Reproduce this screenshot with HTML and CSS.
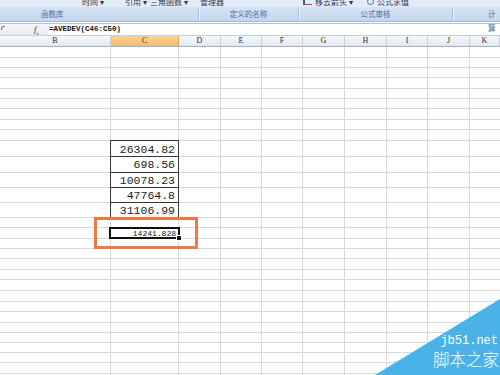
FILE: index.html
```html
<!DOCTYPE html>
<html lang="zh-CN">
<head>
    <meta charset="UTF-8">
    <title>AVEDEV</title>
    <link rel="stylesheet" href="styles.css">
</head>
<body>
    <div class="ribbon">
        <div class="ribbon-top">
            <span></span>
            <span class="cmd">时间 ▾</span>
            <span class="cmd">引用 ▾</span>
            <span class="cmd">三角函数 ▾</span>
            <span class="cmd">管理器</span>
            <span class="cmd"><i class="ico arrows"></i>移去箭头 ▾</span>
            <span class="cmd"><i class="ico lens"></i>公式求值</span>
        </div>
        <div class="groups">
            <div class="group g-lib">函数库</div>
            <div class="group g-name">定义的名称</div>
            <div class="group g-audit">公式审核</div>
            <div class="group g-calc">计算</div>
        </div>
    </div>

    <div class="formula-bar">
        <div class="name-box"><span class="corner"></span></div>
        <div class="fx"><i>f</i><sub>x</sub></div>
        <div class="formula">=AVEDEV(C46:C50)</div>
    </div>

    <div class="col-heads">
        <div class="head w-b">B</div>
        <div class="head w-c active">C</div>
        <div class="head w-d">D</div>
        <div class="head w-e">E</div>
        <div class="head w-f">F</div>
        <div class="head w-g">G</div>
        <div class="head w-h">H</div>
        <div class="head w-i">I</div>
        <div class="head w-j">J</div>
        <div class="head w-k">K</div>
    </div>

    <div class="sheet">
        <div class="row t"></div>
        <div class="row"></div>
        <div class="row"></div>
        <div class="row t"></div>
        <div class="row"></div>
        <div class="row"></div>
        <div class="row t"></div>
        <div class="row"></div>
        <div class="row t"></div>

        <div class="row data tall"><div class="cell first">26304.82</div></div>
        <div class="row data tall"><div class="cell">698.56</div></div>
        <div class="row data"><div class="cell">10078.23</div></div>
        <div class="row data"><div class="cell">47764.8</div></div>
        <div class="row data"><div class="cell">31106.99</div></div>

        <div class="row"></div>
        <div class="row t"><div class="result">14241.828<span class="handle"></span></div></div>
        <div class="row"></div>
        <div class="row"></div>
        <div class="row t"></div>
        <div class="row"></div>
        <div class="row t"></div>
        <div class="row t"></div>
        <div class="row"></div>
        <div class="row t"></div>
        <div class="row"></div>
        <div class="row"></div>
        <div class="row"></div>
        <div class="row"></div>
        <div class="row t"></div>
        <div class="row"></div>

        <div class="mark"></div>
    </div>

    <div class="watermark">
        <div class="wm-site">jb51.net</div>
        <div class="wm-name">脚本之家</div>
    </div>
</body>
</html>
```

FILE: styles.css
```css
body {
    margin: 0;
    width: 500px;
    height: 375px;
    overflow: hidden;
    position: relative;
    background: #ffffff;
    font-family: "Liberation Sans", "Noto Sans CJK SC", sans-serif;
}

/* ribbon */
.ribbon {
    height: 21px;
    border-bottom: 1px solid #a3bad8;
    background: #dde7f5;
}
.ribbon-top {
    height: 7px;
    overflow: hidden;
    display: grid;
    grid-template-columns: 82px 43px 25px 50px 103px 64px 1fr;
    background: #e4ecf8;
}
.cmd {
    font-family: "Noto Sans CJK SC", sans-serif;
    font-size: 8px;
    line-height: 9px;
    margin-top: -5px;
    color: #2a3550;
    white-space: nowrap;
    display: flex;
    align-items: center;
    overflow: hidden;
}
.ico {
    display: inline-block;
    flex: none;
    width: 7px;
    height: 6px;
    margin-right: 3px;
}
.arrows {
    border-left: 2px solid #3a5e98;
    border-bottom: 1px solid #c04040;
}
.lens {
    border: 1px solid #4d6b9a;
    border-radius: 50%;
    width: 5px;
    height: 5px;
}
.groups {
    display: flex;
    height: 14px;
    background: linear-gradient(#d6e3f3, #c4d6ee);
}
.group {
    flex: none;
    box-sizing: border-box;
    text-align: center;
    font-family: "Noto Sans CJK SC", sans-serif;
    font-size: 7.5px;
    line-height: 14px;
    color: #4d6d9c;
    border-right: 1px solid #a9bedb;
    box-shadow: 1px 0 0 #eef4fb;
}
.g-lib { width: 199px; text-align: left; padding-left: 41px; }
.g-name { width: 100px; }
.g-audit { width: 154px; }
.g-calc { flex: 1; text-align: left; padding-left: 35px; border-right: none; box-shadow: none; }

/* formula bar */
.formula-bar {
    display: flex;
    height: 11px;
    margin-top: 1px;
    border-top: 1px solid #b4c4d8;
    background: #ffffff;
}
.name-box {
    width: 30px;
    background: linear-gradient(#f4f6f9, #e8ecf2);
    position: relative;
}
.corner {
    position: absolute;
    left: 1px;
    top: 2px;
    width: 3px;
    height: 3px;
    border-top: 1px solid #777;
    border-left: 1px solid #777;
    border-top-left-radius: 3px;
}
.fx {
    width: 18px;
    font-family: "Liberation Serif", serif;
    font-size: 9px;
    line-height: 10px;
    color: #333;
    padding-left: 4px;
    box-sizing: border-box;
    background: linear-gradient(#f4f6f9, #e8ecf2);
}
.fx sub {
    font-size: 5px;
    font-style: italic;
}
.formula {
    flex: 1;
    padding-left: 1px;
    font-family: "Liberation Mono", monospace;
    font-size: 7.5px;
    font-weight: bold;
    line-height: 11px;
    color: #111;
}

/* column headings */
.col-heads {
    display: flex;
    height: 12px;
    box-sizing: border-box;
    border-top: 1px solid #c4cfdc;
    border-bottom: 1px solid #9fb2c7;
    background: linear-gradient(#f6f8fb, #e3e8ef);
}
.head {
    flex: none;
    box-sizing: border-box;
    border-right: 1px solid #c6d0dc;
    text-align: center;
    font-family: "Liberation Serif", serif;
    font-size: 8px;
    line-height: 10px;
    color: #2e2e2e;
}
.head.active {
    background: linear-gradient(#fad59a, #f4bc6c);
    border-right-color: #e3a955;
}
.w-b { width: 111px; }
.w-c { width: 68px; }
.w-d { width: 42px; }
.w-e { width: 41px; }
.w-f { width: 41px; }
.w-g { width: 42px; }
.w-h { width: 42px; }
.w-i { width: 41px; }
.w-j { width: 42px; }
.w-k { width: 30px; }

/* cells */
.sheet {
    position: relative;
    height: 329px;
    overflow: hidden;
    background:
        linear-gradient(#d6dae0, #d6dae0) 110px 0 / 1px 100% no-repeat,
        linear-gradient(#d6dae0, #d6dae0) 178px 0 / 1px 100% no-repeat,
        linear-gradient(#d6dae0, #d6dae0) 220px 0 / 1px 100% no-repeat,
        linear-gradient(#d6dae0, #d6dae0) 261px 0 / 1px 100% no-repeat,
        linear-gradient(#d6dae0, #d6dae0) 302px 0 / 1px 100% no-repeat,
        linear-gradient(#d6dae0, #d6dae0) 344px 0 / 1px 100% no-repeat,
        linear-gradient(#d6dae0, #d6dae0) 386px 0 / 1px 100% no-repeat,
        linear-gradient(#d6dae0, #d6dae0) 427px 0 / 1px 100% no-repeat,
        linear-gradient(#d6dae0, #d6dae0) 469px 0 / 1px 100% no-repeat,
        #ffffff;
}
.row {
    display: flex;
    height: 10px;
    box-sizing: border-box;
    border-bottom: 1px solid #d6dae0;
}
.row.t { height: 11px; }
.row.data { height: 15px; }
.row.data.tall { height: 16px; }
.cell {
    margin-left: 110px;
    width: 69px;
    height: calc(100% + 1px);
    box-sizing: border-box;
    border: 1px solid #3a3a3a;
    border-top: none;
    background: #ffffff;
    text-align: right;
    padding-right: 3px;
    font-family: "Liberation Mono", monospace;
    font-size: 11.5px;
    line-height: 15px;
    color: #1c1c1c;
}
.cell.first {
    margin-top: -1px;
    height: calc(100% + 2px);
    border-top: 1px solid #3a3a3a;
    line-height: 17px;
}
.result {
    position: relative;
    margin-left: 109px;
    margin-top: -1px;
    width: 71px;
    height: calc(100% + 2px);
    box-sizing: border-box;
    border: 2px solid #111;
    background: #ffffff;
    text-align: right;
    padding-right: 2px;
    font-family: "Liberation Mono", monospace;
    font-size: 8px;
    line-height: 9px;
    color: #111;
}
.handle {
    position: absolute;
    right: -4px;
    bottom: -4px;
    width: 4px;
    height: 4px;
    background: #111;
    border: 1px solid #fff;
}
.mark {
    position: absolute;
    left: 94px;
    top: 170px;
    width: 104px;
    height: 32px;
    box-sizing: border-box;
    border: 3px solid #ef7944;
}

/* watermark */
.watermark {
    position: absolute;
    right: 0;
    bottom: 0;
    width: 125px;
    height: 76px;
    color: #ffffff;
    text-align: right;
}
.watermark::before {
    content: "";
    position: absolute;
    inset: 0;
    background: #4ab2e6;
    clip-path: polygon(100% 0, 100% 100%, 0 100%);
}
.wm-site,
.wm-name {
    position: relative;
}
.wm-site {
    margin-top: 36px;
    padding-right: 2px;
    font-family: "Liberation Mono", monospace;
    font-size: 12px;
    line-height: 12px;
}
.wm-name {
    margin-top: 2px;
    padding-right: 1px;
    font-family: "Noto Sans CJK SC", sans-serif;
    font-size: 16.5px;
    line-height: 20px;
    font-weight: 300;
}
```
